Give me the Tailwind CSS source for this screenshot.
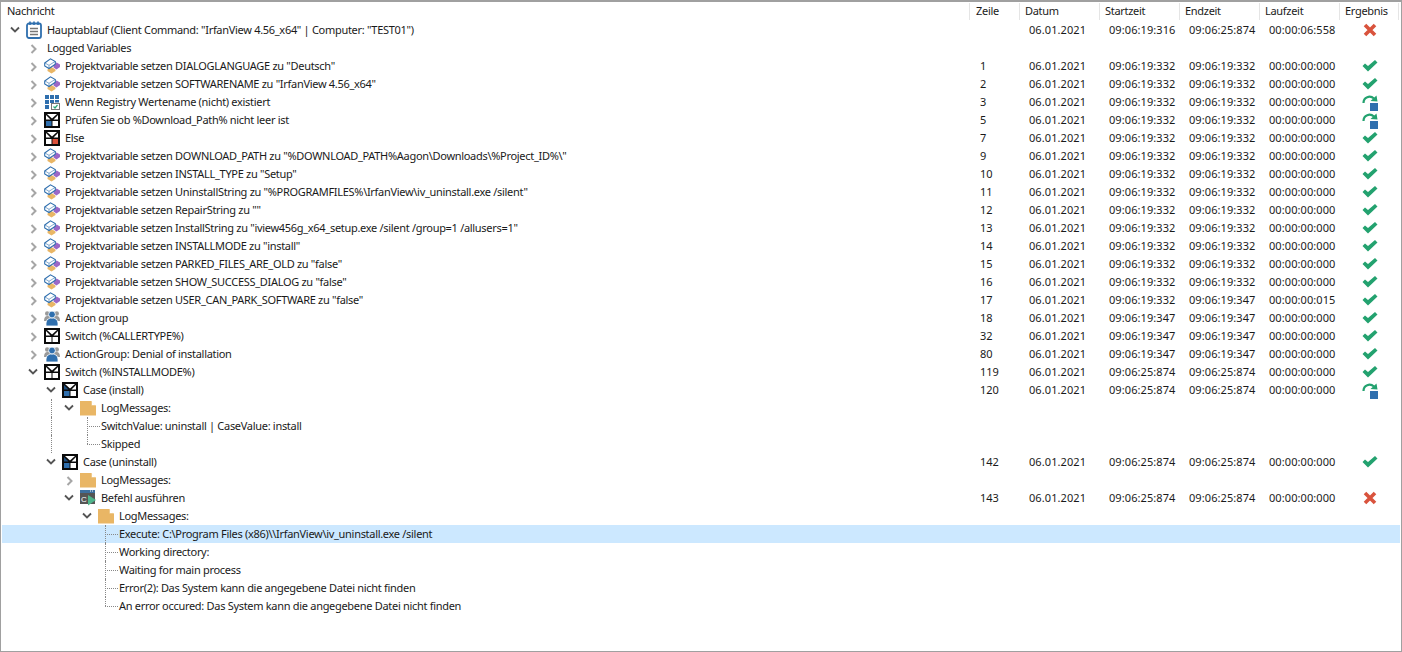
<!DOCTYPE html>
<html lang="de">
<head>
<meta charset="UTF-8">
<title>Protokoll</title>
<script src="https://cdn.jsdelivr.net/npm/@tailwindcss/browser@4"></script>
</head>
<body class="bg-white overflow-hidden">
<svg class="hidden">
  <symbol id="i-list" viewBox="0 0 16 18"><rect x="1" y="2.500" width="14" height="14.500" rx="2" fill="#fff" stroke="#2f6fae" stroke-width="1.800"/><path d="M4 0.500v3.500M8 0.500v3.500M12 0.500v3.500" stroke="#2f6fae" stroke-width="1.600"/><path d="M4 7.500h8M4 10.500h8M4 13.500h8" stroke="#777" stroke-width="1.300"/></symbol>
  <symbol id="i-var" viewBox="0 0 16 16"><path d="M3.500 11.500l4-2.500 4 2.500v1.500l-4 2.500-4-2.500z" fill="#e9b665"/><path d="M9.500 6.500l3.200-2L16 6.500V9l-3.500 2.500-3-2z" fill="#9b68c6"/><path d="M0.700 5L6.500 0.800 11.300 3.500v2.700L5 10.500 0.700 8z" fill="#fff" stroke="#2f6fae" stroke-width="1.100"/><path d="M1 5L5 7.300 11 3.500M5 7.300v3" fill="none" stroke="#2f6fae" stroke-width="0.600"/></symbol>
  <symbol id="i-reg" viewBox="0 0 16 16"><path d="M1 1h4v4H1zM6 1h4v4H6zM11 1h4v4h-4zM1 6h4v4H1zM6 6h4v3H6zM11 6h4v2.500h-4zM1 11h4v4H1z" fill="#2f6fae"/><rect x="7.500" y="9.500" width="8" height="6" fill="#fff" stroke="#777"/><path d="M9.500 12.500l1.500 1.500 2.500-3" stroke="#2aa876" fill="none" stroke-width="1.200"/></symbol>
  <symbol id="i-sw" viewBox="0 0 16 16"><rect width="16" height="16" fill="#0b0b0b"/><path d="M3 2h10L8 6.500z" fill="#fff"/><rect x="2" y="9" width="5.500" height="5" fill="#fff"/><rect x="8.500" y="9" width="5.500" height="5" fill="#fff"/><path d="M2 3v4.500h4.500zM14 3v4.500H9.500z" fill="#fff"/></symbol>
  <symbol id="i-swp" viewBox="0 0 16 16"><rect width="16" height="16" fill="#0b0b0b"/><path d="M3 2h10L8 6.500z" fill="#fff"/><rect x="2" y="9" width="5.500" height="5" fill="#2f6fae"/><rect x="8.500" y="9" width="5.500" height="5" fill="#fff"/><path d="M2 3v4.500h4.500zM14 3v4.500H9.500z" fill="#fff"/></symbol>
  <symbol id="i-swb" viewBox="0 0 16 16"><rect width="16" height="16" fill="#0b0b0b"/><path d="M3 2h10L8 6.500z" fill="#fff"/><rect x="2" y="9" width="5.500" height="5" fill="#2f6fae"/><rect x="8.500" y="9" width="5.500" height="5" fill="#fff"/><path d="M2 3v4.500h4.500z" fill="#1f4f80"/><path d="M14 3v4.500H9.500z" fill="#fff"/></symbol>
  <symbol id="i-swr" viewBox="0 0 16 16"><rect width="16" height="16" fill="#0b0b0b"/><path d="M3 2h10L8 6.500z" fill="#fff"/><rect x="2" y="9" width="5.500" height="5" fill="#fff"/><rect x="8.500" y="9" width="5.500" height="5" fill="#d9503a"/><path d="M2 3v4.500h4.500zM14 3v4.500H9.500z" fill="#fff"/></symbol>
  <symbol id="i-grp" viewBox="0 0 16 16"><circle cx="3.200" cy="3.500" r="2.200" fill="#9a9a9a"/><circle cx="12.800" cy="3.500" r="2.200" fill="#9a9a9a"/><path d="M0 11q0-5 3.500-5h9q3.500 0 3.500 5z" fill="#9a9a9a"/><path d="M2 16v-3q0-4 4-5h4q4 1 4 5v3z" fill="#2f6fae" stroke="#fff" stroke-width="0.800"/><circle cx="8" cy="4.500" r="3.400" fill="#2f6fae" stroke="#fff" stroke-width="0.800"/></symbol>
  <symbol id="i-doc" viewBox="0 0 16 16"><path d="M0 1h11l5 5v9.500H0z" fill="#e9b665"/><path d="M11.500 1v4.500H16" fill="#fff" stroke="#e9b665" stroke-width="0.500"/></symbol>
  <symbol id="i-cmd" viewBox="0 0 16 16"><rect y="0" width="15" height="14" fill="#555"/><rect y="0" width="15" height="3" fill="#3d6f9e"/><path d="M10 1h1M12 1h1" stroke="#fff"/><text x="1" y="11.500" font-size="8" font-family="Liberation Sans" fill="#fff">C</text><path d="M8 5l8 5-8 5.500z" fill="#4fb58c"/></symbol>
  <symbol id="r-ok" viewBox="0 0 16 12"><path d="M0.500 6L3 3.500 6 6 13 0l2.500 2.500L6 11.500z" fill="#23a26f"/></symbol>
  <symbol id="r-err" viewBox="0 0 14 14"><path d="M2 2l10 10M12 2L2 12" stroke="#d9533d" stroke-width="3.600"/></symbol>
  <symbol id="r-skip" viewBox="0 0 17 16"><path d="M1.500 8C1.500 2 8 0 12 3.500" fill="none" stroke="#23a26f" stroke-width="2.200"/><path d="M14.500 0.500L15.500 6.500 8.500 6z" fill="#23a26f"/><rect x="8" y="8" width="8" height="8" fill="#2f6fae"/></symbol>
</svg>

<div class="h-[652px] border-l border-r border-b border-t-2 border-[#a0a0a0] font-['Noto_Sans',sans-serif] text-[11px] text-[#1a1a1a] relative">
  <div class="flex h-[19px] items-center tracking-[-0.3px]">
    <div class="w-[968px] pl-[6px]">Nachricht</div>
    <div class="w-[50px] pl-[6px] border-l border-[#e5e5e5]">Zeile</div>
    <div class="w-[80px] pl-[5px] border-l border-[#e5e5e5]">Datum</div>
    <div class="w-[80px] pl-[5px] border-l border-[#e5e5e5]">Startzeit</div>
    <div class="w-[80px] pl-[5px] border-l border-[#e5e5e5]">Endzeit</div>
    <div class="w-[80px] pl-[5px] border-l border-[#e5e5e5]">Laufzeit</div>
    <div class="w-[60px] pl-[5px] border-l border-r border-[#e5e5e5]">Ergebnis</div>
  </div>
  <div id="rows"></div>
</div>

<script>
  // level, chevron (o/c/-), icon, text, zeile, start, end, dauer, result
  const rows = [
    [0,'o','list','Hauptablauf (Client Command: "IrfanView 4.56_x64" | Computer: "TEST01")','','09:06:19:316','09:06:25:874','00:00:06:558','err'],
    [1,'c','','Logged Variables'],
    [1,'c','var','Projektvariable setzen DIALOGLANGUAGE zu "Deutsch"','1','09:06:19:332','09:06:19:332','00:00:00:000','ok'],
    [1,'c','var','Projektvariable setzen SOFTWARENAME zu "IrfanView 4.56_x64"','2','09:06:19:332','09:06:19:332','00:00:00:000','ok'],
    [1,'c','reg','Wenn Registry Wertename (nicht) existiert','3','09:06:19:332','09:06:19:332','00:00:00:000','skip'],
    [1,'c','swp','Prüfen Sie ob %Download_Path% nicht leer ist','5','09:06:19:332','09:06:19:332','00:00:00:000','skip'],
    [1,'c','swr','Else','7','09:06:19:332','09:06:19:332','00:00:00:000','ok'],
    [1,'c','var','Projektvariable setzen DOWNLOAD_PATH zu "%DOWNLOAD_PATH%Aagon\\Downloads\\%Project_ID%\\"','9','09:06:19:332','09:06:19:332','00:00:00:000','ok'],
    [1,'c','var','Projektvariable setzen INSTALL_TYPE zu "Setup"','10','09:06:19:332','09:06:19:332','00:00:00:000','ok'],
    [1,'c','var','Projektvariable setzen UninstallString zu "%PROGRAMFILES%\\IrfanView\\iv_uninstall.exe /silent"','11','09:06:19:332','09:06:19:332','00:00:00:000','ok'],
    [1,'c','var','Projektvariable setzen RepairString zu ""','12','09:06:19:332','09:06:19:332','00:00:00:000','ok'],
    [1,'c','var','Projektvariable setzen InstallString zu "iview456g_x64_setup.exe /silent /group=1 /allusers=1"','13','09:06:19:332','09:06:19:332','00:00:00:000','ok'],
    [1,'c','var','Projektvariable setzen INSTALLMODE zu "install"','14','09:06:19:332','09:06:19:332','00:00:00:000','ok'],
    [1,'c','var','Projektvariable setzen PARKED_FILES_ARE_OLD zu "false"','15','09:06:19:332','09:06:19:332','00:00:00:000','ok'],
    [1,'c','var','Projektvariable setzen SHOW_SUCCESS_DIALOG zu "false"','16','09:06:19:332','09:06:19:332','00:00:00:000','ok'],
    [1,'c','var','Projektvariable setzen USER_CAN_PARK_SOFTWARE zu "false"','17','09:06:19:332','09:06:19:347','00:00:00:015','ok'],
    [1,'c','grp','Action group','18','09:06:19:347','09:06:19:347','00:00:00:000','ok'],
    [1,'c','sw','Switch (%CALLERTYPE%)','32','09:06:19:347','09:06:19:347','00:00:00:000','ok'],
    [1,'c','grp','ActionGroup: Denial of installation','80','09:06:19:347','09:06:19:347','00:00:00:000','ok'],
    [1,'o','sw','Switch (%INSTALLMODE%)','119','09:06:25:874','09:06:25:874','00:00:00:000','ok'],
    [2,'o','swb','Case (install)','120','09:06:25:874','09:06:25:874','00:00:00:000','skip'],
    [3,'o','doc','LogMessages:'],
    [4,'-','','SwitchValue: uninstall | CaseValue: install'],
    [4,'-','','Skipped'],
    [2,'o','swb','Case (uninstall)','142','09:06:25:874','09:06:25:874','00:00:00:000','ok'],
    [3,'c','doc','LogMessages:'],
    [3,'o','cmd','Befehl ausführen','143','09:06:25:874','09:06:25:874','00:00:00:000','err'],
    [4,'o','doc','LogMessages:'],
    [5,'-','','Execute: C:\\Program Files (x86)\\\\IrfanView\\iv_uninstall.exe /silent'],
    [5,'-','','Working directory:'],
    [5,'-','','Waiting for main process'],
    [5,'-','','Error(2): Das System kann die angegebene Datei nicht finden'],
    [5,'-','','An error occured: Das System kann die angegebene Datei nicht finden'],
  ];

  const esc = s => s.replace(/&/g, '&amp;').replace(/"/g, '&quot;');
  const chevOpen = '<path d="M1 1.500l4 4 4-4" fill="none" stroke="#555" stroke-width="1.800"/>';
  const chevClosed = '<path d="M1.500 1l4 4-4 4" fill="none" stroke="#a6a6a6" stroke-width="2"/>';
  const marks = {
    ok: '<svg class="w-4 h-3"><use href="#r-ok"/></svg>',
    err: '<svg class="w-[14px] h-[14px]"><use href="#r-err"/></svg>',
    skip: '<svg class="w-[17px] h-4 mt-[2px]"><use href="#r-skip"/></svg>',
  };

  let html = '';
  rows.forEach((r, i) => {
    const [lvl, chev, icon, text, zeile, start, end, dauer, res] = r;
    const sel = i === 28;
    let c = '';
    if (chev !== '-') {
      const x = 9 + 18 * lvl + (chev === 'c' ? 2 : 0);
      c = `<svg class="absolute top-[5px]" style="left:${x}px" width="10" height="10">${chev === 'o' ? chevOpen : chevClosed}</svg>`;
    }
    // dotted connectors for the leaf rows
    if (chev === '-') {
      const cx = 14 + 18 * lvl;
      const last = i === rows.length - 1 || i === 23;
      c += `<div class="absolute border-l border-dotted border-[#888]" style="left:${cx}px;top:0;height:${last ? 9 : 18}px"></div>`;
      c += `<div class="absolute border-t border-dotted border-[#888] top-[9px] w-[13px]" style="left:${cx}px"></div>`;
    }
    // line between the two Case nodes
    if (i >= 21 && i <= 23) {
      c += `<div class="absolute top-0 h-[18px] border-l border-dotted border-[#888] left-[50px]"></div>`;
    }
    const ico = icon ? `<svg class="absolute w-4 ${icon === 'list' ? 'top-0 h-[18px]' : 'top-px h-4'}" style="left:${25 + 18 * lvl}px"><use href="#i-${icon}"/></svg>` : '';
    const tx = (icon ? 46 : 28) + 18 * lvl;
    html += `<div class="flex h-[18px] leading-[18px] items-center relative ${sel ? 'bg-[#cce8ff] ml-px mr-px' : ''}">
      <div class="w-[968px] relative h-[18px] whitespace-nowrap tracking-[-0.3px] ${sel ? '-ml-px' : ''}">${c}${ico}<span class="absolute" style="left:${tx}px">${esc(text)}</span></div>
      <div class="w-[50px] pl-[11px]">${zeile || ''}</div>
      <div class="w-[80px] pl-[10px] tracking-[0.08px]">${start ? '06.01.2021' : ''}</div>
      <div class="w-[80px] pl-[10px] tracking-[0.08px]">${start || ''}</div>
      <div class="w-[80px] pl-[10px] tracking-[0.08px]">${end || ''}</div>
      <div class="w-[80px] pl-[10px] tracking-[0.08px]">${dauer || ''}</div>
      <div class="w-[60px] pl-[2px] flex justify-center">${res ? marks[res] : ''}</div>
    </div>`;
  });
  document.getElementById('rows').innerHTML = html;
</script>
</body>
</html>
